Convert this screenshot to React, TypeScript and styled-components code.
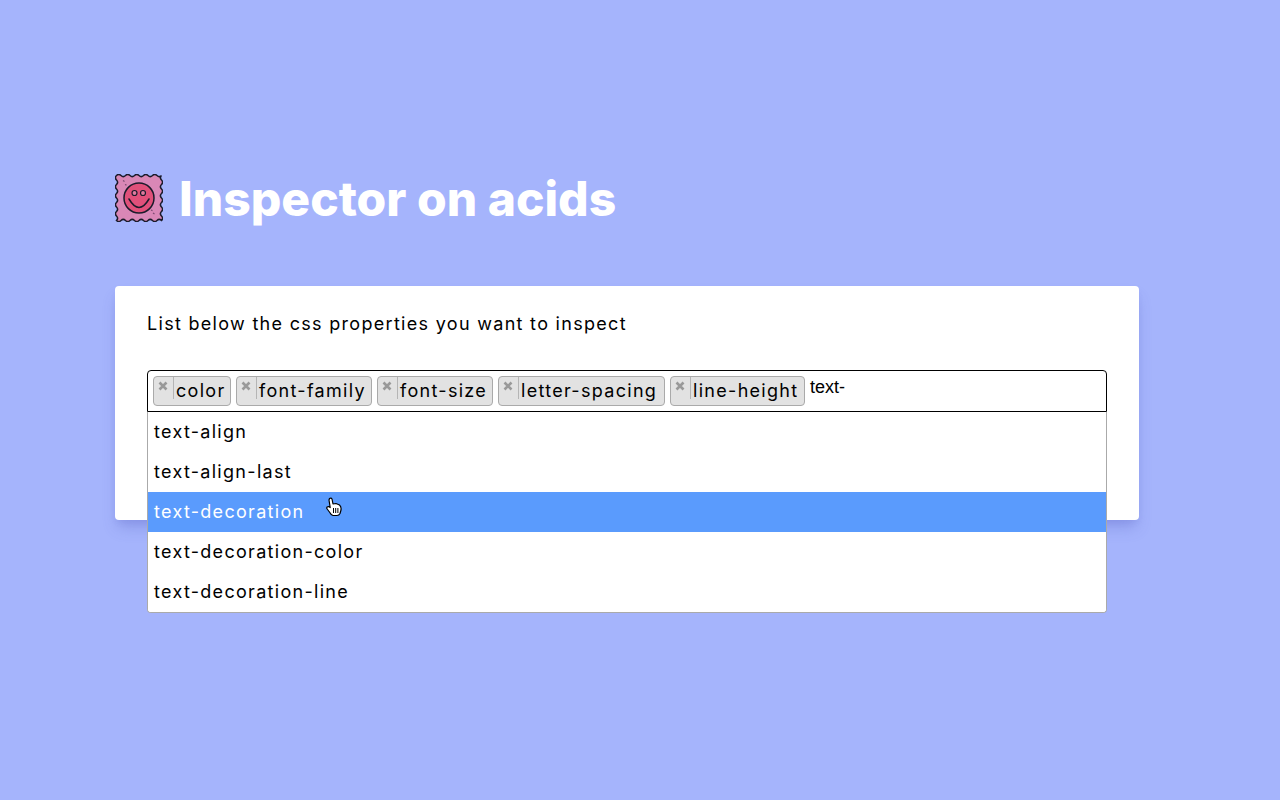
import React from "react";
import styled, { createGlobalStyle } from "styled-components";

const Global = createGlobalStyle`
  html, body { margin: 0; padding: 0; height: 100%; }
  body { background: #a5b4fc; font-family: Inter, "Liberation Sans", sans-serif; overflow: hidden; }
`;
const Page = styled.main`
  width: 1024px;
  margin-left: 115px;
  padding-top: 173px;
`;
const Header = styled.header`
  display: flex;
  align-items: center;
  gap: 16px;
  height: 50px;
  margin-bottom: 63px;
`;
const Title = styled.h1`
  margin: 0;
  padding-top: 1px;
  font-size: 48px;
  line-height: 50px;
  font-weight: 800;
  color: #fff;
  white-space: nowrap;
`;
const Card = styled.section`
  position: relative;
  box-sizing: border-box;
  height: 234px;
  padding: 28px 32px;
  background: #fff;
  border-radius: 4px;
  box-shadow: 0 10px 15px -3px rgba(80, 90, 190, 0.3), 0 4px 6px -2px rgba(80, 90, 190, 0.12);
`;
const Label = styled.p`
  margin: 0 0 36px;
  font-size: 18px;
  line-height: 20px;
  letter-spacing: 1.3px;
  color: #000;
`;
const Select = styled.div`
  position: relative;
`;
const Control = styled.div`
  box-sizing: border-box;
  height: 42px;
  display: flex;
  align-items: flex-start;
  gap: 5px;
  padding: 5px;
  border: 1px solid #000;
  border-radius: 4px 4px 0 0;
  background: #fff;
`;
const Tag = styled.div<{ $width: number }>`
  box-sizing: border-box;
  width: ${(p) => p.$width}px;
  height: 30px;
  display: flex;
  align-items: flex-start;
  background: #e2e2e2;
  border: 1px solid #aaa;
  border-radius: 4px;
  font-size: 18px;
  line-height: 28px;
  letter-spacing: 1.3px;
  white-space: nowrap;
  color: #000;
`;
const Remove = styled.span`
  box-sizing: border-box;
  flex: none;
  width: 20px;
  height: 22px;
  display: flex;
  justify-content: center;
  padding: 4px 2px 0 0;
  border-right: 1px solid #b5b5b5;
`;
const TagText = styled.span`
  padding-left: 2px;
`;
const Typed = styled.span`
  font-family: "Liberation Sans", Arial, sans-serif;
  font-size: 18px;
  line-height: 22px;
  color: #000;
`;
const Menu = styled.ul`
  position: absolute;
  top: 42px;
  left: 0;
  right: 0;
  margin: 0;
  padding: 0;
  list-style: none;
  background: #fff;
  border: 1px solid #aaa;
  border-top: 0;
  border-radius: 0 0 4px 4px;
  overflow: hidden;
`;
const Option = styled.li<{ $active?: boolean }>`
  height: 40px;
  padding: 0 6px;
  font-size: 18px;
  line-height: 40px;
  letter-spacing: 1.3px;
  color: ${(p) => (p.$active ? "#fff" : "#000")};
  background: ${(p) => (p.$active ? "#5a9bfd" : "#fff")};
`;
const Pointer = styled.div`
  position: absolute;
  left: 179px;
  top: 127px;
`;

const CrossIcon = () => (
  <svg width="10" height="10" viewBox="0 0 10 10">
    <path d="M1.5 1.5 L8.5 8.5 M8.5 1.5 L1.5 8.5" stroke="#999" strokeWidth="2.6" />
  </svg>
);

const wave = (dx: number, dy: number) => {
  // five periods of a small wave along one 45px side of the stamp
  const step = 4.5;
  const amp = 2.2;
  let d = "";
  for (let i = 0; i < 10; i++) {
    const sign = i % 2 === 0 ? -1 : 1;
    const cx = (dx * step) / 2 + (dy !== 0 ? dy * sign * amp : 0);
    const cy = (dy * step) / 2 + (dx !== 0 ? sign * amp : 0);
    d += `q${cx} ${cy} ${dx * step} ${dy * step}`;
  }
  return d;
};

const Stamp = () => (
  <svg width="48" height="48" viewBox="0 0 48 48">
    <path
      d={`M1.5 1.5${wave(1, 0)}${wave(0, 1)}${wave(-1, 0)}${wave(0, -1)}Z`}
      fill="#d987b6"
      stroke="#1b1b2b"
      strokeWidth="1.5"
      strokeLinejoin="miter"
    />
    <circle cx="24" cy="24" r="15" fill="#e0507a" stroke="#1b1b2b" strokeWidth="1.5" />
    <circle cx="19.5" cy="19" r="2.5" fill="#e07a9e" stroke="#1b1b2b" strokeWidth="1.2" />
    <circle cx="28" cy="19" r="2.5" fill="#e07a9e" stroke="#1b1b2b" strokeWidth="1.2" />
    <path d="M14 25 Q24 42 34 25" fill="none" stroke="#1b1b2b" strokeWidth="1.5" strokeLinecap="round" />
    <path d="M8 6.5 l1.5 1 M10 10.5 l1.5 .6 M38 39 l1.5 1 M36 36 l1.5 .6" stroke="#7a4a70" strokeWidth="1.2" />
  </svg>
);

const HandCursor = () => (
  <svg width="16" height="20" viewBox="0 0 16 20">
    <path
      d="M3.5 1.5 Q5 .5 6 2 L7 7 L10 6.5 L13.5 8 Q15.5 10 15 13 L14 16.5 Q13 18.5 11 18.5 L7 18.5 Q5 18 3.8 15.5 L.8 11.5 Q.5 9.5 2.6 9.5 L4.2 10.5 L3 3 Z"
      fill="#fff"
      stroke="#000"
      strokeWidth="1.2"
      strokeLinejoin="round"
    />
    <path d="M7.5 11 V16 M9.7 11 V16 M11.9 11 V16" stroke="#000" strokeWidth="1" />
  </svg>
);

const tags = [
  { name: "color", width: 78 },
  { name: "font-family", width: 136 },
  { name: "font-size", width: 116 },
  { name: "letter-spacing", width: 167 },
  { name: "line-height", width: 135 },
];
const options = ["text-align", "text-align-last", "text-decoration", "text-decoration-color", "text-decoration-line"];

export default function App() {
  return (
    <Page>
      <Global />
      <Header>
        <Stamp />
        <Title>Inspector on acids</Title>
      </Header>
      <Card>
        <Label>List below the css properties you want to inspect</Label>
        <Select>
          <Control>
            {tags.map((t) => (
              <Tag key={t.name} $width={t.width}>
                <Remove>
                  <CrossIcon />
                </Remove>
                <TagText>{t.name}</TagText>
              </Tag>
            ))}
            <Typed>text-</Typed>
          </Control>
          <Menu>
            {options.map((o, i) => (
              <Option key={o} $active={i === 2}>
                {o}
              </Option>
            ))}
          </Menu>
          <Pointer>
            <HandCursor />
          </Pointer>
        </Select>
      </Card>
    </Page>
  );
}
